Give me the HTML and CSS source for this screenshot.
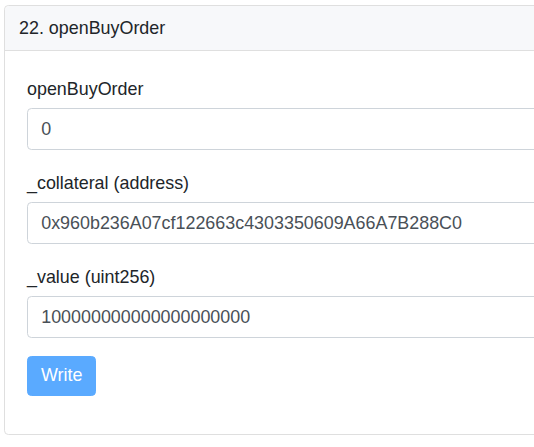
FILE: index.html
```html
<!DOCTYPE html>
<html lang="en">
<head>
    <meta charset="UTF-8">
    <meta name="viewport" content="width=device-width, initial-scale=1.0">
    <title>openBuyOrder</title>
    <link rel="stylesheet" href="styles.css">
</head>
<body>
    <div class="card">
        <div class="card-header">22. openBuyOrder</div>
        <div class="card-body">
            <form>
                <div class="form-group">
                    <label>openBuyOrder</label>
                    <input type="text" class="form-control" value="0">
                </div>
                <div class="form-group">
                    <label>_collateral (address)</label>
                    <input type="text" class="form-control" value="0x960b236A07cf122663c4303350609A66A7B288C0">
                </div>
                <div class="form-group">
                    <label>_value (uint256)</label>
                    <input type="text" class="form-control" value="100000000000000000000">
                </div>
                <div class="form-group">
                    <button type="button" class="btn-write" disabled>Write</button>
                </div>
            </form>
        </div>
    </div>
</body>
</html>
```

FILE: styles.css
```css
html, body {
    margin: 0;
    overflow: hidden;
}

body {
    font-family: "Liberation Sans", Arial, sans-serif;
    font-size: 17.9px;
    line-height: 26.4px;
    color: #212529;
    background-color: #fff;
}

.card {
    margin: 5px 0 0 4px;
    width: 600px;
    border: 1px solid #dfdfdf;
    border-radius: 4.4px;
}

.card-header {
    height: 45px;
    box-sizing: border-box;
    padding: 9.3px 14px;
    background-color: #f7f8fa;
    border-bottom: 1px solid #dfdfdf;
    border-radius: 4.4px 4.4px 0 0;
}

.card-body {
    padding: 22.6px 22px 20.8px;
}

form {
    margin: 0;
}

.form-group {
    margin-bottom: 17.6px;
}

label {
    display: block;
    padding-top: 2px;
    margin-bottom: 6px;
}

.form-control {
    display: block;
    box-sizing: border-box;
    width: 100%;
    height: 42px;
    padding: 6.6px 13.2px;
    font-family: inherit;
    font-size: 17.9px;
    line-height: 26.4px;
    color: #495057;
    background-color: #fff;
    border: 1px solid #ced4da;
    border-radius: 4.4px;
    margin: 0;
}

.btn-write {
    display: block;
    box-sizing: border-box;
    height: 40px;
    padding: 0 13px;
    font-family: inherit;
    font-size: 17.9px;
    line-height: 26.4px;
    color: #fff;
    background-color: #5aaaff;
    border: 1px solid #5aaaff;
    border-radius: 4.4px;
}
```
